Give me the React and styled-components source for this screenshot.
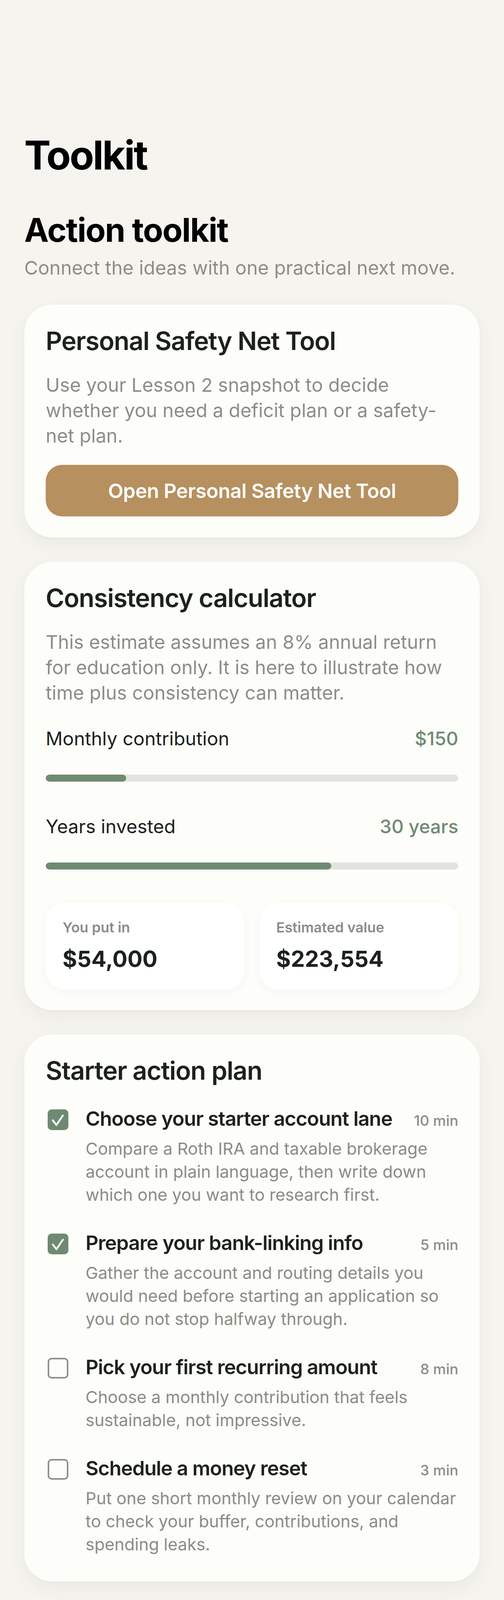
import React from "react";
import styled, { createGlobalStyle } from "styled-components";

const Global = createGlobalStyle`
  * { box-sizing: border-box; }
  html, body { margin: 0; padding: 0; background: #f6f4ef; }
  body { font-family: Inter, "Noto Sans", "Liberation Sans", sans-serif; -webkit-font-smoothing: antialiased; }
`;

const Page = styled.main`
  padding: 336px 62px 38px;
  display: flex;
  flex-direction: column;
  color: #1b221e;
`;

const LargeTitle = styled.h1`
  margin: 0;
  font-size: 102px;
  line-height: 122px;
  font-weight: 700;
  letter-spacing: -0.032em;
  color: #000;
`;

const SectionTitle = styled.h2`
  margin: 81px 0 0;
  font-size: 84px;
  line-height: 100px;
  font-weight: 700;
  letter-spacing: -0.02em;
  color: #000;
`;

const SectionSub = styled.p`
  margin: 14px 0 0;
  font-size: 48.5px;
  line-height: 65px;
  color: #8c8c88;
`;

const Cards = styled.div`
  display: flex;
  flex-direction: column;
  gap: 62px;
  margin-top: 62px;
`;

const Card = styled.section`
  background: #fdfdf9;
  border-radius: 72px;
  padding: 54px 55px ${(p) => p.$pb || 54}px;
  box-shadow: 0 18px 50px rgba(70, 60, 40, 0.06), 0 2px 6px rgba(70, 60, 40, 0.03);
  display: flex;
  flex-direction: column;
`;

const CardTitle = styled.h3`
  margin: 0;
  font-size: 65px;
  line-height: 78px;
  font-weight: 600;
  letter-spacing: -0.02em;
  color: #1b221e;
`;

const CardDesc = styled.p`
  margin: 41px 0 0;
  font-size: 48.5px;
  line-height: 65px;
  color: #8c8c88;
`;

const PrimaryButton = styled.button`
  margin-top: 42px;
  height: 132px;
  border: none;
  border-radius: 42px;
  background: #b6905f;
  color: #fff;
  font-family: inherit;
  font-size: 51px;
  font-weight: 600;
  letter-spacing: -0.01em;
  width: 100%;
`;

const Field = styled.div`
  display: flex;
  flex-direction: column;
  margin-top: ${(p) => p.$mt}px;
`;

const FieldRow = styled.div`
  display: flex;
  justify-content: space-between;
  align-items: baseline;
  font-size: 48px;
  line-height: 61px;
`;

const FieldLabel = styled.span`
  color: #1b221e;
`;

const FieldValue = styled.span`
  color: #6f8a72;
  font-weight: 500;
`;

const Track = styled.div`
  margin-top: 62px;
  height: 18px;
  border-radius: 9px;
  background: #e4e3df;
  overflow: hidden;
`;

const Fill = styled.div`
  height: 100%;
  border-radius: 9px;
  background: #6f8a72;
`;

const Stats = styled.div`
  margin-top: 85px;
  display: grid;
  grid-template-columns: 1fr 1fr;
  gap: 38px;
`;

const StatBox = styled.div`
  background: #ffffff;
  border-radius: 50px;
  padding: 41px 43px 44px;
  box-shadow: 0 6px 24px rgba(70, 60, 40, 0.04);
  display: flex;
  flex-direction: column;
  gap: 25px;
`;

const StatLabel = styled.span`
  font-size: 36px;
  line-height: 44px;
  font-weight: 600;
  color: #8c8c88;
`;

const StatValue = styled.span`
  font-size: 57px;
  line-height: 68px;
  font-weight: 700;
  color: #1b221e;
`;

const Tasks = styled.ul`
  list-style: none;
  margin: 53px 0 0;
  padding: 0;
  display: flex;
  flex-direction: column;
  gap: 63px;
`;

const Task = styled.li`
  display: flex;
  align-items: flex-start;
  gap: 44px;
`;

const Box = styled.span`
  flex: none;
  margin: 7px 0 0 5px;
  width: 53px;
  height: 53px;
  border-radius: 10px;
  display: flex;
  align-items: center;
  justify-content: center;
  background: ${(p) => (p.$checked ? "#6f8a72" : "transparent")};
  border: ${(p) => (p.$checked ? "none" : "4.5px solid #8f8f8d")};
`;

const TaskBody = styled.div`
  flex: 1;
  min-width: 0;
  display: flex;
  flex-direction: column;
  gap: 17px;
`;

const TaskHead = styled.div`
  display: flex;
  justify-content: space-between;
  align-items: baseline;
  gap: 24px;
`;

const ItemTitle = styled.span`
  font-size: 51px;
  line-height: 61px;
  font-weight: 600;
  letter-spacing: -0.022em;
  color: #1b221e;
`;

const Minutes = styled.span`
  flex: none;
  font-size: 37px;
  line-height: 45px;
  font-weight: 500;
  color: #8c8c88;
`;

const SmallDesc = styled.p`
  margin: 0;
  font-size: 43px;
  line-height: 59px;
  color: #8c8c88;
`;

const Steps = styled.ol`
  list-style: none;
  margin: 52px 0 0;
  padding: 0;
  display: flex;
  flex-direction: column;
  gap: 65px;
`;

const Step = styled.li`
  display: flex;
  flex-direction: column;
`;

const StepLabel = styled.span`
  font-size: 36px;
  line-height: 44px;
  font-weight: 600;
  color: #6f8a72;
`;

const StepTitle = styled(ItemTitle)`
  margin-top: 22px;
`;

const StepDesc = styled(SmallDesc)`
  margin-top: 20px;
  line-height: 60px;
`;

const Check = () => (
  <svg width="53" height="53" viewBox="0 0 53 53" fill="none">
    <polyline
      points="13,28 22.5,40 39,15.5"
      stroke="#fff"
      strokeWidth="4.5"
      strokeLinecap="round"
      strokeLinejoin="round"
    />
  </svg>
);

const tasks = [
  {
    title: "Choose your starter account lane",
    min: "10 min",
    done: true,
    desc: "Compare a Roth IRA and taxable brokerage account in plain language, then write down which one you want to research first.",
  },
  {
    title: "Prepare your bank-linking info",
    min: "5 min",
    done: true,
    desc: "Gather the account and routing details you would need before starting an application so you do not stop halfway through.",
  },
  {
    title: "Pick your first recurring amount",
    min: "8 min",
    done: false,
    desc: "Choose a monthly contribution that feels sustainable, not impressive.",
  },
  {
    title: "Schedule a money reset",
    min: "3 min",
    done: false,
    desc: "Put one short monthly review on your calendar to check your buffer, contributions, and spending leaks.",
  },
];

const steps = [
  {
    title: "Choose the account type",
    desc: "Explain common beginner starting points such as a Roth IRA or taxable brokerage account as educational examples.",
  },
  {
    title: "Create your broker profile",
    desc: "Use the broker app or website, complete the requested identification steps, and pause if any screen feels confusing.",
  },
  {
    title: "Link your checking account",
    desc: "Connect the account that already receives your income so future transfers can happen without extra friction.",
  },
  {
    title: "Learn what a broad index fund is",
    desc: "Teach simplicity here. The goal is to understand a diversified long-term fund, not to turn beginners into daily traders.",
  },
  {
    title: "Turn on recurring contributions",
    desc: "Choose a boringly sustainable amount and frequency. Consistency matters more than ambition in month one.",
  },
  {
    title: "Check less, continue more",
    desc: "Reinforce that this is a long game. The default posture is to keep contributing, not to constantly tweak.",
  },
];

export default function App() {
  const monthly = 150;
  const years = 30;
  const put = monthly * 12 * years;
  const fmt = (n) => "$" + n.toLocaleString("en-US");

  return (
    <>
      <Global />
      <Page>
        <LargeTitle>Toolkit</LargeTitle>
        <SectionTitle>Action toolkit</SectionTitle>
        <SectionSub>Connect the ideas with one practical next move.</SectionSub>

        <Cards>
          <Card>
            <CardTitle>Personal Safety Net Tool</CardTitle>
            <CardDesc>
              Use your Lesson 2 snapshot to decide whether you need a deficit plan or a safety-net plan.
            </CardDesc>
            <PrimaryButton type="button">Open Personal Safety Net Tool</PrimaryButton>
          </Card>

          <Card $pb={53}>
            <CardTitle>Consistency calculator</CardTitle>
            <CardDesc>
              This estimate assumes an 8% annual return for education only. It is here to illustrate how time plus consistency can matter.
            </CardDesc>
            <Field $mt={54}>
              <FieldRow>
                <FieldLabel>Monthly contribution</FieldLabel>
                <FieldValue>${monthly}</FieldValue>
              </FieldRow>
              <Track>
                <Fill style={{ width: "19.5%" }} />
              </Track>
            </Field>
            <Field $mt={84}>
              <FieldRow>
                <FieldLabel>Years invested</FieldLabel>
                <FieldValue>{years} years</FieldValue>
              </FieldRow>
              <Track>
                <Fill style={{ width: "69.2%" }} />
              </Track>
            </Field>
            <Stats>
              <StatBox>
                <StatLabel>You put in</StatLabel>
                <StatValue>{fmt(put)}</StatValue>
              </StatBox>
              <StatBox>
                <StatLabel>Estimated value</StatLabel>
                <StatValue>{fmt(223554)}</StatValue>
              </StatBox>
            </Stats>
          </Card>

          <Card $pb={66}>
            <CardTitle>Starter action plan</CardTitle>
            <Tasks>
              {tasks.map((t) => (
                <Task key={t.title}>
                  <Box $checked={t.done}>{t.done && <Check />}</Box>
                  <TaskBody>
                    <TaskHead>
                      <ItemTitle>{t.title}</ItemTitle>
                      <Minutes>{t.min}</Minutes>
                    </TaskHead>
                    <SmallDesc>{t.desc}</SmallDesc>
                  </TaskBody>
                </Task>
              ))}
            </Tasks>
          </Card>

          <Card $pb={64}>
            <CardTitle>Broker setup example</CardTitle>
            <CardDesc>A simple example of how to open an account and automate contributions.</CardDesc>
            <Steps>
              {steps.map((s, i) => (
                <Step key={s.title}>
                  <StepLabel>Step {i + 1}</StepLabel>
                  <StepTitle>{s.title}</StepTitle>
                  <StepDesc>{s.desc}</StepDesc>
                </Step>
              ))}
            </Steps>
          </Card>
        </Cards>
      </Page>
    </>
  );
}
